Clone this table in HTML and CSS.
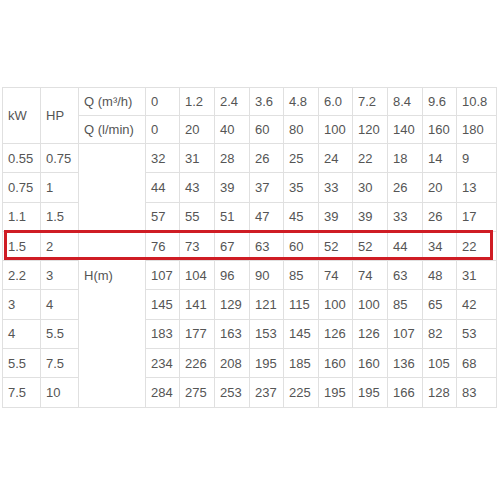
FILE: index.html
```html
<!DOCTYPE html>
<html>
<head>
<meta charset="utf-8">
<link rel="stylesheet" href="styles.css">
</head>
<body>
<div class="wrap">
  <table class="pump">
    <colgroup>
      <col class="c38"><col class="c38"><col class="c67">
      <col class="c34"><col class="c35"><col class="c35"><col class="c34"><col class="c35">
      <col class="c34"><col class="c35"><col class="c35"><col class="c34"><col class="c40">
    </colgroup>
    <tr class="hrow">
      <td rowspan="2">kW</td><td rowspan="2">HP</td><td>Q (m³/h)</td>
      <td>0</td><td>1.2</td><td>2.4</td><td>3.6</td><td>4.8</td><td>6.0</td><td>7.2</td><td>8.4</td><td>9.6</td><td>10.8</td>
    </tr>
    <tr class="hrow">
      <td>Q (l/min)</td>
      <td>0</td><td>20</td><td>40</td><td>60</td><td>80</td><td>100</td><td>120</td><td>140</td><td>160</td><td>180</td>
    </tr>
    <tr>
      <td>0.55</td><td>0.75</td><td rowspan="9">H(m)</td>
      <td>32</td><td>31</td><td>28</td><td>26</td><td>25</td><td>24</td><td>22</td><td>18</td><td>14</td><td>9</td>
    </tr>
    <tr>
      <td>0.75</td><td>1</td>
      <td>44</td><td>43</td><td>39</td><td>37</td><td>35</td><td>33</td><td>30</td><td>26</td><td>20</td><td>13</td>
    </tr>
    <tr>
      <td>1.1</td><td>1.5</td>
      <td>57</td><td>55</td><td>51</td><td>47</td><td>45</td><td>39</td><td>39</td><td>33</td><td>26</td><td>17</td>
    </tr>
    <tr>
      <td>1.5</td><td>2</td>
      <td>76</td><td>73</td><td>67</td><td>63</td><td>60</td><td>52</td><td>52</td><td>44</td><td>34</td><td>22</td>
    </tr>
    <tr>
      <td>2.2</td><td>3</td>
      <td>107</td><td>104</td><td>96</td><td>90</td><td>85</td><td>74</td><td>74</td><td>63</td><td>48</td><td>31</td>
    </tr>
    <tr>
      <td>3</td><td>4</td>
      <td>145</td><td>141</td><td>129</td><td>121</td><td>115</td><td>100</td><td>100</td><td>85</td><td>65</td><td>42</td>
    </tr>
    <tr>
      <td>4</td><td>5.5</td>
      <td>183</td><td>177</td><td>163</td><td>153</td><td>145</td><td>126</td><td>126</td><td>107</td><td>82</td><td>53</td>
    </tr>
    <tr>
      <td>5.5</td><td>7.5</td>
      <td>234</td><td>226</td><td>208</td><td>195</td><td>185</td><td>160</td><td>160</td><td>136</td><td>105</td><td>68</td>
    </tr>
    <tr>
      <td>7.5</td><td>10</td>
      <td>284</td><td>275</td><td>253</td><td>237</td><td>225</td><td>195</td><td>195</td><td>166</td><td>128</td><td>83</td>
    </tr>
  </table>
  <div class="mark"></div>
</div>
</body>
</html>
```
FILE: styles.css
```css
html, body {
  margin: 0;
  padding: 0;
  background: #ffffff;
}
.wrap {
  position: relative;
  margin: 87px 0 0 2px;
  width: 496px;
}
.pump {
  border-collapse: collapse;
  table-layout: fixed;
  width: 495px;
  font-family: "Liberation Sans", Arial, sans-serif;
  font-size: 13px;
  color: #555555;
}
.c38 { width: 38px; }
.c67 { width: 67px; }
.c34 { width: 34px; }
.c35 { width: 35px; }
.c40 { width: 40px; }
.pump td {
  border: 1px solid #e0e0e0;
  padding: 0 0 0 5px;
  height: 28.3px;
  vertical-align: middle;
  white-space: nowrap;
  text-align: left;
}
.pump .hrow td {
  height: 27px;
}
.mark {
  position: absolute;
  left: 2px;
  top: 143px;
  width: 489px;
  height: 30px;
  box-sizing: border-box;
  border: 3px solid #cf1c24;
}
```
